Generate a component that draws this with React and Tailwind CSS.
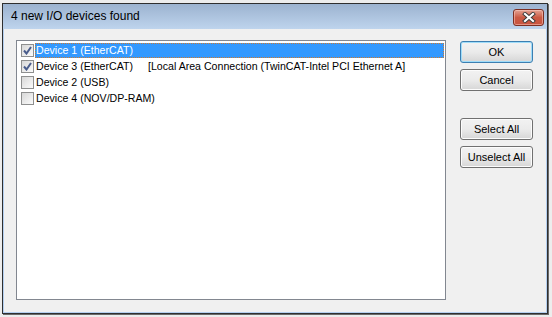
const devices = [
  { name: "Device 1 (EtherCAT)", checked: true, selected: true },
  { name: "Device 3 (EtherCAT)", checked: true, extra: "[Local Area Connection (TwinCAT-Intel PCI Ethernet A]" },
  { name: "Device 2 (USB)", checked: false },
  { name: "Device 4 (NOV/DP-RAM)", checked: false },
];

function CheckBox({ checked }) {
  return (
    <span className="w-[13px] h-[13px] shrink-0 border border-[#8e8f8f] bg-gradient-to-br from-[#d8d8d8] to-[#fbfbfb] flex items-center justify-center">
      {checked && (
        <svg width="9" height="9" viewBox="0 0 9 9">
          <path d="M1 4.5 L3.5 7.5 L8 1" fill="none" stroke="#4a5d8c" strokeWidth="2" />
        </svg>
      )}
    </span>
  );
}

function CloseButton() {
  return (
    <div className="w-[31px] h-[17px] mt-[5px] rounded-[3px] border border-[#7d2f22] bg-gradient-to-b from-[#e3a293] via-[#cb5a44] to-[#c8543f] flex items-center justify-center shadow-[inset_0_0_0_1px_rgba(255,210,200,0.5)]">
      <svg width="14" height="11" viewBox="0 0 14 11">
        <path d="M3 2 L11 9 M11 2 L3 9" stroke="#3a3a3a" strokeWidth="4" strokeLinecap="square" />
        <path d="M3 2 L11 9 M11 2 L3 9" stroke="#ffffff" strokeWidth="2.2" strokeLinecap="square" />
      </svg>
    </div>
  );
}

function Button({ children, primary, className = "" }) {
  return (
    <button
      className={
        "w-[73px] h-[22px] rounded-[3px] border text-[11px] text-black flex items-center justify-center bg-gradient-to-b from-[#f2f2f2] via-[#ebebeb] to-[#d6d6d6] " +
        (primary
          ? "border-[#3c7fb1] shadow-[inset_0_0_0_1px_#9fdcf9] "
          : "border-[#707070] shadow-[inset_0_0_0_1px_#fcfcfc] ") +
        className
      }
    >
      {children}
    </button>
  );
}

export default function App() {
  return (
    <div className="w-[552px] h-[317px] bg-[#ededed] pt-[3px] pl-[2px] font-['Liberation_Sans',Arial,sans-serif]">
      <div className="w-[546px] h-[311px] flex flex-col border border-[#2f2f2f] shadow-[1px_1px_0_#6a6a6a]">
        <div className="h-[25px] shrink-0 flex justify-between pl-[8px] pr-[3px] bg-gradient-to-b from-[#9cb3d0] to-[#bed4ed]">
          <span className="text-[12px] leading-[25px] text-black">4 new I/O devices found</span>
          <CloseButton />
        </div>
        <div className="flex-1 flex border-x border-b border-[#b4cff0] bg-[#f0f0f0] pt-[11px] pl-[12px]">
          <div className="w-[430px] h-[260px] border border-[#828790] bg-white pt-[1px]">
            {devices.map((d) => (
              <div key={d.name} className="h-[16px] flex items-center pl-[4px] pr-[1px]">
                <CheckBox checked={d.checked} />
                <div
                  className={
                    "flex-1 h-[15px] ml-[1px] pl-[1px] flex items-center text-[10.6px] leading-[15px] whitespace-nowrap " +
                    (d.selected ? "bg-[#3399ff] text-white outline outline-1 outline-dotted outline-offset-[-1px] outline-[#cc7a33]" : "text-black")
                  }
                >
                  <span className="inline-block w-[112px]">{d.name}</span>
                  {d.extra && <span>{d.extra}</span>}
                </div>
              </div>
            ))}
          </div>
          <div className="ml-[14px] pt-[1px] flex flex-col gap-[6px]">
            <Button primary>OK</Button>
            <Button>Cancel</Button>
            <Button className="mt-[21px]">Select All</Button>
            <Button>Unselect All</Button>
          </div>
        </div>
      </div>
    </div>
  );
}
